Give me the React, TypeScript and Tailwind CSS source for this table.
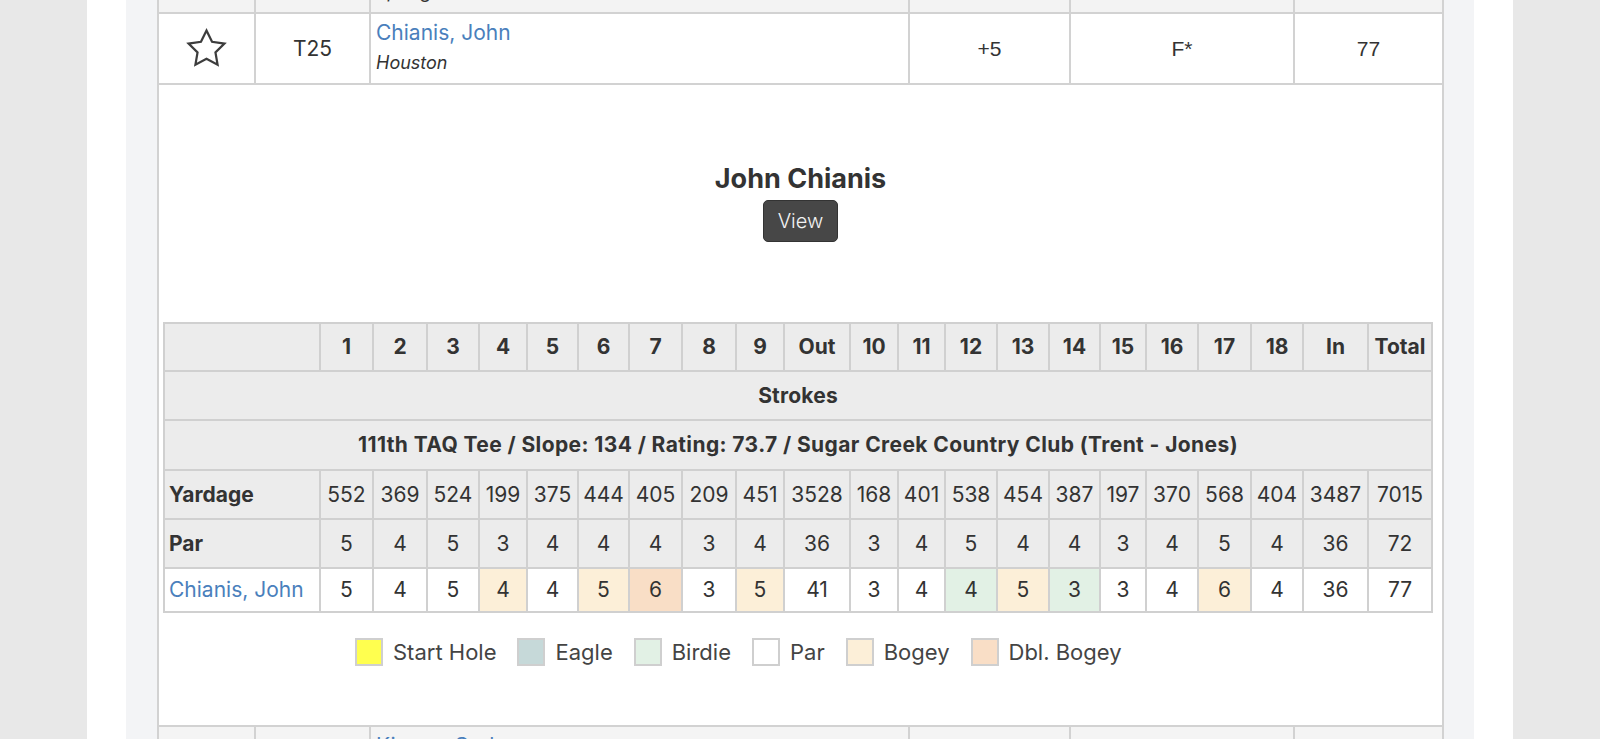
import React from "react"

const holes = ["1", "2", "3", "4", "5", "6", "7", "8", "9", "Out", "10", "11", "12", "13", "14", "15", "16", "17", "18", "In", "Total"]

const colWidths = [
    "w-[156px]", "w-[53px]", "w-[54px]", "w-[52px]", "w-[48px]", "w-[51px]", "w-[51px]", "w-[53px]", "w-[54px]", "w-[48px]", "w-[66px]",
    "w-[48px]", "w-[47px]", "w-[52px]", "w-[52px]", "w-[51px]", "w-[46px]", "w-[52px]", "w-[53px]", "w-[52px]", "w-[65px]", "w-[64px]",
]

const yardage = [552, 369, 524, 199, 375, 444, 405, 209, 451, 3528, 168, 401, 538, 454, 387, 197, 370, 568, 404, 3487, 7015]
const par = [5, 4, 5, 3, 4, 4, 4, 3, 4, 36, 3, 4, 5, 4, 4, 3, 4, 5, 4, 36, 72]
const strokes = [5, 4, 5, 4, 4, 5, 6, 3, 5, 41, 3, 4, 4, 5, 3, 3, 4, 6, 4, 36, 77]
const marks = ["", "", "", "bogey", "", "bogey", "double", "", "bogey", "", "", "", "birdie", "bogey", "birdie", "", "", "bogey", "", "", ""]

const fills: Record<string, string> = {
    "": "bg-white",
    bogey: "bg-[#fcefd8]",
    double: "bg-[#f9dec6]",
    birdie: "bg-[#e2f1e5]",
}

const legend = [
    ["Start Hole", "bg-[#ffff4f]"],
    ["Eagle", "bg-[#c6d9d9]"],
    ["Birdie", "bg-[#e2f1e5]"],
    ["Par", "bg-white"],
    ["Bogey", "bg-[#fcefd8]"],
    ["Dbl. Bogey", "bg-[#f9dec6]"],
]

const cell = "border-2 border-[#d2d2d2]"
const card = "border-2 border-[#d0d0d0] bg-[#ececec]"

const Star = () => (
    <svg width="43" height="43" viewBox="0 0 24 24" fill="none" stroke="#3d3d3d" strokeWidth="1.25" strokeLinejoin="miter" className="mx-auto">
        <polygon points="12,2 15.09,8.26 22,9.27 17,14.14 18.18,21.02 12,17.77 5.82,21.02 7,14.14 2,9.27 8.91,8.26" />
    </svg>
)

const PlayerRow = ({ pos, name, city, score, thru, total, bg }: { pos: string, name: string, city: string, score: string, thru: string, total: string, bg: string }) => (
    <tr className={`h-[71px] ${bg}`}>
        <td className={cell}><Star /></td>
        <td className={`${cell} text-center`}>{pos}</td>
        <td className={`${cell} px-[5px] align-top`}>
            <div className="pt-[6px] text-[21px] leading-[26px] text-[#4a7fbc]">{name}</div>
            <div className="mt-[5px] text-[18px] italic leading-[24px] text-[#333]">{city}</div>
        </td>
        <td className={`${cell} text-center font-['Liberation_Sans',sans-serif]`}>{score}</td>
        <td className={`${cell} text-center font-['Liberation_Sans',sans-serif]`}>{thru}</td>
        <td className={`${cell} text-center font-['Liberation_Sans',sans-serif]`}>{total}</td>
    </tr>
)

const Scorecard = () => (
    <table className="ml-[4px] mt-[80px] w-[1270px] table-fixed border-collapse text-[21px] text-[#333]">
        <colgroup>
            {colWidths.map((w, i) => <col key={i} className={w} />)}
        </colgroup>
        <tbody>
            <tr className="h-[48px]">
                <th className={card}></th>
                {holes.map((h) => <th key={h} className={`${card} font-bold`}>{h}</th>)}
            </tr>
            <tr className="h-[49px]">
                <td colSpan={22} className={`${card} text-center font-bold tracking-[0.2px]`}>Strokes</td>
            </tr>
            <tr className="h-[50px]">
                <td colSpan={22} className={`${card} text-center font-bold tracking-[0.4px]`}>
                    111th TAQ Tee / Slope: 134 / Rating: 73.7 / Sugar Creek Country Club (Trent - Jones)
                </td>
            </tr>
            <tr className="h-[49px]">
                <th className={`${card} pl-[4px] text-left font-bold`}>Yardage</th>
                {yardage.map((y, i) => <td key={i} className={`${card} text-center`}>{y}</td>)}
            </tr>
            <tr className="h-[49px]">
                <th className={`${card} pl-[4px] text-left font-bold`}>Par</th>
                {par.map((p, i) => <td key={i} className={`${card} text-center`}>{p}</td>)}
            </tr>
            <tr className="h-[44px]">
                <td className="border-2 border-[#d0d0d0] bg-white pl-[4px] text-[#4a7fbc]">Chianis, John</td>
                {strokes.map((s, i) => (
                    <td key={i} className={`border-2 border-[#d0d0d0] text-center ${fills[marks[i]]}`}>{s}</td>
                ))}
            </tr>
        </tbody>
    </table>
)

export default function App() {
    return (
        <div className="h-[739px] overflow-hidden bg-[#e8e8e8] font-['Inter',sans-serif] text-[21px] text-[#333]">
            <div className="mx-auto h-full w-[1426px] bg-white px-[39px]">
                <div className="flow-root h-full bg-[#f3f4f6] pl-[31px]">
                    <table className="-mt-[59px] w-[1285px] table-fixed border-collapse bg-white">
                        <colgroup>
                            <col className="w-[97px]" />
                            <col className="w-[115px]" />
                            <col className="w-[539px]" />
                            <col className="w-[161px]" />
                            <col className="w-[224px]" />
                            <col className="w-[149px]" />
                        </colgroup>
                        <tbody>
                            <PlayerRow pos="T23" name="Brandt, Mike" city="Spring" score="+4" thru="F" total="76" bg="bg-[#f3f3f3]" />
                            <PlayerRow pos="T25" name="Chianis, John" city="Houston" score="+5" thru="F*" total="77" bg="bg-white" />
                            <tr>
                                <td colSpan={6} className={`${cell} bg-white p-0 align-top`}>
                                    <div className="pt-[78px] pb-[59px]">
                                        <div className="text-center text-[27px] font-bold leading-[32px] text-[#333]">John Chianis</div>
                                        <div className="mt-[5px] flex justify-center">
                                            <button className="h-[42px] w-[75px] rounded-[5px] border border-[#333] bg-[#474747] text-[20px] font-light text-[#f2f2f2]">
                                                View
                                            </button>
                                        </div>
                                        <Scorecard />
                                        <div className="ml-[196px] mt-[25px] flex items-center text-[22px] leading-[28px] text-[#444]">
                                            {legend.map(([label, fill]) => (
                                                <div key={label} className="mr-[21px] flex items-center gap-[10px]">
                                                    <span className={`h-7 w-7 border-2 border-[#cfcfcf] ${fill}`}></span>
                                                    <span>{label}</span>
                                                </div>
                                            ))}
                                        </div>
                                    </div>
                                </td>
                            </tr>
                            <PlayerRow pos="T25" name="Kinsey, Cody" city="Katy" score="+5" thru="F" total="77" bg="bg-[#f4f4f4]" />
                        </tbody>
                    </table>
                </div>
            </div>
        </div>
    )
}
